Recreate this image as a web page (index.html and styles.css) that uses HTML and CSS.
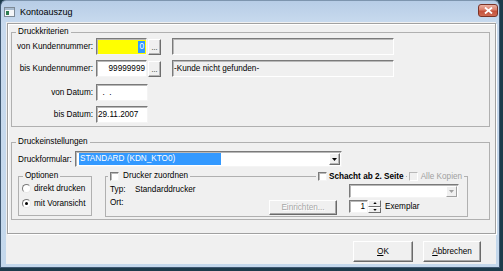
FILE: index.html
```html
<!DOCTYPE html>
<html>
<head>
<meta charset="utf-8">
<link rel="stylesheet" href="styles.css">
</head>
<body>
<div class="window">
  <div class="titlebar">
    <svg class="appicon" width="11" height="10" viewBox="0 0 11 10"><rect x="0.5" y="0.5" width="10" height="9" fill="#f4f6f8" stroke="#7d8a96"/><rect x="1" y="1" width="9" height="2" fill="#a9bccf"/><rect x="2" y="4" width="3" height="4" fill="#2e7d4f"/></svg>
    <span class="title">Kontoauszug</span>
    <span class="close"><svg width="9" height="7" viewBox="0 0 9 7"><path d="M1 0.5 L8 6.5 M8 0.5 L1 6.5" stroke="#fff" stroke-width="1.8"/></svg></span>
  </div>
  <div class="client">
    <div class="panel">
      <fieldset class="group g-krit">
        <legend>Druckkriterien</legend>
        <div class="krit">
          <div class="row r1"><span class="lbl">von Kundennummer:</span><span class="edit kd yellow"><span class="sel">0</span></span><span class="dots">...</span><span class="infobox"></span></div>
          <div class="row r2"><span class="lbl">bis Kundennummer:</span><span class="edit kd">99999999</span><span class="dots">...</span><span class="infobox">-Kunde nicht gefunden-</span></div>
          <div class="row r3"><span class="lbl">von Datum:</span><span class="edit dt pre">  .  .</span></div>
          <div class="row r4"><span class="lbl">bis Datum:</span><span class="edit dt">29.11.2007</span></div>
        </div>
      </fieldset>
      <fieldset class="group g-einst">
        <legend>Druckeinstellungen</legend>
        <div class="einst">
          <div class="formrow">
            <span class="lbl2">Druckformular:</span>
            <span class="combo main"><span class="combo-sel">STANDARD (KDN_KTO0)</span><span class="arrowbtn"><svg width="5" height="3" viewBox="0 0 5 3"><path d="M0 0H5L2.5 3Z" fill="#000"/></svg></span></span>
          </div>
          <div class="lower">
            <fieldset class="group g-opt">
              <legend>Optionen</legend>
              <div class="radio-row"><span class="radio"></span>direkt drucken</div>
              <div class="radio-row r-2"><span class="radio checked"></span>mit Voransicht</div>
            </fieldset>
            <fieldset class="group g-druck">
              <legend><span class="chk"></span>Drucker zuordnen</legend>
              <div class="overlays">
                <span class="ov bold"><span class="chk"></span>Schacht ab 2. Seite</span>
                <span class="ov dis"><span class="chk dis"></span>Alle Kopien</span>
              </div>
              <div class="druck-body">
                <div class="info">
                  <div class="info-row"><span class="k">Typ:</span><span>Standarddrucker</span></div>
                  <div class="info-row"><span class="k">Ort:</span></div>
                </div>
                <span class="btn einrichten">Einrichten...</span>
                <div class="druck-right">
                  <span class="combo small"><span class="arrowbtn dis"><svg width="5" height="3" viewBox="0 0 5 3"><path d="M0 0H5L2.5 3Z" fill="#a0a0a0"/></svg></span></span>
                  <div class="spin-row">
                    <span class="spin-edit">1</span>
                    <span class="spin-btns">
                      <span class="sb"><svg width="5" height="3" viewBox="0 0 5 3"><path d="M0 3H5L2.5 0Z" fill="#000"/></svg></span>
                      <span class="sb"><svg width="5" height="3" viewBox="0 0 5 3"><path d="M0 0H5L2.5 3Z" fill="#000"/></svg></span>
                    </span>
                    <span class="exemplar">Exemplar</span>
                  </div>
                </div>
              </div>
            </fieldset>
          </div>
        </div>
      </fieldset>
    </div>
    <div class="btnrow">
      <span class="btn dlg ok"><u>O</u>K</span>
      <span class="btn dlg cancel"><u>A</u>bbrechen</span>
    </div>
  </div>
</div>
</body>
</html>
```
FILE: styles.css
```css
* { box-sizing: border-box; }
html, body { margin: 0; padding: 0; }
body {
  background: #1d3b4b;
  width: 503px;
  height: 271px;
  overflow: hidden;
  font-family: "Liberation Sans", Arial, sans-serif;
  font-size: 8.2px;
  color: #000;
}
.window {
  width: 500px;
  height: 268px;
  border: 1px solid #3f5872;
  border-top-color: #7d95ae;
  border-radius: 6px 6px 0 0;
  background: linear-gradient(to bottom, #b7cde6 0, #c8daee 22px, #c4d8ec 100%);
  padding: 0 3px 3px 5px;
  display: flex;
  flex-direction: column;
}
.titlebar {
  height: 21px;
  margin: 0 -3px 0 -5px;
  display: flex;
  align-items: center;
}
.appicon { margin-left: 3px; flex: none; }
.title {
  margin-left: 5px;
  font-size: 9px;
  color: #000;
  flex: 1;
}
.close {
  align-self: flex-start;
  margin-top: 3px;
  margin-right: 1px;
  width: 20px;
  height: 13px;
  border: 1px solid #7b3326;
  border-radius: 3px;
  background: linear-gradient(to bottom, #eab1a3 0, #d97e6a 45%, #c4503a 55%, #cf6a52 100%);
  display: flex;
  align-items: center;
  justify-content: center;
}
.client {
  flex: 1;
  background: #f0f0f0;
  display: flex;
  flex-direction: column;
}
.panel {
  margin: 1px 0 0 1px;
  width: 489px;
  height: 211px;
  border: 1px solid #a0a0a0;
  box-shadow: inset 1px 1px 0 #fff, 1px 1px 0 #fff;
  padding: 0 5px 0 3px;
}
.group {
  margin: 0;
  padding: 0;
  border: 1px solid #b0b0b0;
  min-width: 0;
  position: relative;
}
.group > legend {
  padding: 0 2px;
  margin-left: 4px;
  line-height: 12px;
  height: 12px;
  display: flex;
  align-items: center;
}
.g-krit { margin-top: 2px; }
.krit { padding: 0 0 3px 0; }
.row { display: flex; align-items: center; height: 17px; }
.r2 { margin-top: 5px; }
.r3 { margin-top: 7px; }
.r4 { margin-top: 5px; }
.lbl {
  width: 81px;
  text-align: right;
  margin-right: 3px;
}
.edit {
  height: 17px;
  background: #fff;
  border: 1px solid;
  border-color: #7a7a7a #f4f4f4 #f4f4f4 #7a7a7a;
  box-shadow: inset 1px 1px 0 #b8b8b8;
  display: flex;
  align-items: center;
  white-space: pre;
}
.kd { width: 51px; justify-content: flex-end; padding-right: 1px; }
.dt { width: 52px; padding-left: 1px; }
.yellow { background: #ffff00; padding-right: 1px; }
.sel {
  background: #3399ff;
  color: #fff;
  height: 12px;
  line-height: 12px;
  padding: 0 1px;
}
.dots {
  margin-left: 1px;
  width: 13px;
  height: 16px;
  background: #f0f0f0;
  border: 1px solid;
  border-color: #fff #6e6e6e #6e6e6e #fff;
  box-shadow: inset -1px -1px 0 #b4b4b4;
  display: flex;
  align-items: flex-end;
  justify-content: center;
  line-height: 9px;
  font-size: 7px;
  padding-bottom: 2px;
}
.infobox {
  margin-left: 11px;
  width: 222px;
  height: 17px;
  border: 1px solid;
  border-color: #7a7a7a #fff #fff #7a7a7a;
  box-shadow: inset 1px 1px 0 #b8b8b8;
  background: #f0f0f0;
  display: flex;
  align-items: center;
  padding-left: 1px;
}
.g-einst { margin-top: 9px; }
.einst { padding: 0 0 2px 6px; }
.formrow { display: flex; align-items: center; margin-top: 3px; height: 16px; }
.lbl2 { width: 55px; }
.combo {
  display: flex;
  align-items: center;
  background: #fff;
  border: 1px solid;
  border-color: #7a7a7a #f4f4f4 #f4f4f4 #7a7a7a;
  box-shadow: inset 1px 1px 0 #b8b8b8;
}
.combo.main { margin-left: 2px; width: 267px; height: 16px; }
.combo-sel {
  margin-left: 3px;
  width: 142px;
  height: 12px;
  line-height: 12px;
  background: #3399ff;
  color: #fff;
  padding-left: 1px;
}
.arrowbtn {
  margin-left: auto;
  margin-right: 1px;
  width: 11px;
  height: 12px;
  background: #f0f0f0;
  border: 1px solid;
  border-color: #fff #6e6e6e #6e6e6e #fff;
  box-shadow: inset -1px -1px 0 #b4b4b4;
  display: flex;
  align-items: center;
  justify-content: center;
}
.arrowbtn.dis { height: 11px; border-color: #fff #a0a0a0 #a0a0a0 #fff; box-shadow: none; }
.lower { display: flex; align-items: flex-start; margin-top: 3px; }
.g-opt { width: 74px; height: 46px; flex: none; }
.radio-row { display: flex; align-items: center; height: 12px; padding-left: 3px; }
.r-2 { margin-top: 3px; }
.radio {
  width: 9px;
  height: 9px;
  border-radius: 50%;
  background: #fff;
  border: 1px solid;
  border-color: #7a7a7a #e8e8e8 #e8e8e8 #7a7a7a;
  margin-right: 3px;
  display: flex;
  align-items: center;
  justify-content: center;
}
.radio.checked::after {
  content: "";
  width: 3px;
  height: 3px;
  border-radius: 50%;
  background: #000;
}
.g-druck { width: 363px; height: 47px; margin-left: 13px; flex: none; }
.g-druck > legend { margin-left: 2px; }
.chk {
  width: 9px;
  height: 9px;
  background: #fff;
  border: 1px solid;
  border-color: #7a7a7a #f4f4f4 #f4f4f4 #7a7a7a;
  box-shadow: inset 1px 1px 0 #b8b8b8;
  margin-right: 4px;
  flex: none;
}
.overlays {
  position: absolute;
  left: 210px;
  top: -12px;
  display: flex;
  gap: 1px;
}
.ov {
  background: #f0f0f0;
  height: 12px;
  display: flex;
  align-items: center;
  padding: 0 2px;
}
.ov .chk { margin-right: 2px; }
.ov.dis .chk { margin-right: 3px; }
.bold { font-weight: bold; }
.dis { color: #a0a0a0; }
.chk.dis { background: #f0f0f0; border-color: #b8b8b8 #fff #fff #b8b8b8; box-shadow: none; }
.druck-body { display: flex; align-items: flex-start; padding: 1px 0 0 4px; }
.info { width: 159px; flex: none; }
.info-row { display: flex; height: 13px; align-items: center; }
.k { width: 25px; }
.btn {
  background: #f0f0f0;
  border: 1px solid;
  border-color: #fff #6a6a6a #6a6a6a #fff;
  box-shadow: inset -1px -1px 0 #a8a8a8;
  display: flex;
  align-items: center;
  justify-content: center;
  flex: none;
}
.einrichten {
  margin-top: 17px;
  width: 68px;
  height: 15px;
  color: #a7a7a7;
  text-shadow: 1px 1px 0 #fff;
}
.druck-right { margin-left: 12px; width: 110px; display: flex; flex-direction: column; flex: none; }
.combo.small { margin-top: 1px; width: 110px; height: 14px; }
.spin-row { display: flex; align-items: center; margin-top: 2px; height: 13px; }
.spin-edit {
  width: 19px;
  height: 13px;
  background: #fff;
  border: 1px solid;
  border-color: #7a7a7a #f4f4f4 #f4f4f4 #7a7a7a;
  box-shadow: inset 1px 1px 0 #b8b8b8;
  display: flex;
  align-items: center;
  justify-content: flex-end;
  padding-right: 2px;
}
.spin-btns { width: 13px; height: 13px; display: flex; flex-direction: column; }
.sb {
  flex: 1;
  background: #f0f0f0;
  border: 1px solid;
  border-color: #fff #6e6e6e #6e6e6e #fff;
  display: flex;
  align-items: center;
  justify-content: center;
}
.sb svg { width: 4px; height: 2px; }
.exemplar { margin-left: 4px; }
.btnrow {
  display: flex;
  justify-content: flex-end;
  gap: 10px;
  margin-top: 7px;
  padding-right: 15px;
}
.dlg { height: 21px; }
.ok { width: 60px; }
.cancel { width: 58px; }
.dlg u { text-decoration: underline; }
```
